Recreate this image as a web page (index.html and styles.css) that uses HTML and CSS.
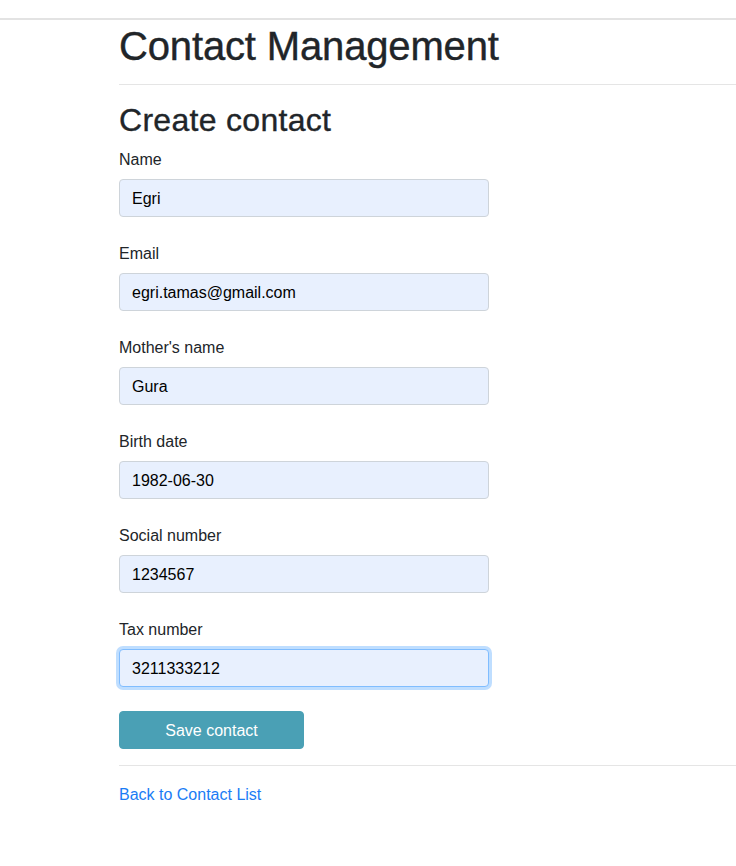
FILE: index.html
```html
<!DOCTYPE html>
<html lang="en">
<head>
<meta charset="utf-8">
<title>Create contact</title>
<link rel="stylesheet" href="styles.css">
</head>
<body>
<header class="topbar"></header>
<main class="page">
  <h1 class="title">Contact Management</h1>
  <hr class="rule rule-top">
  <h2 class="subtitle">Create contact</h2>
  <form class="form">
    <div class="form-group">
      <label class="label" for="name">Name</label>
      <input class="control" id="name" type="text" value="Egri">
    </div>
    <div class="form-group">
      <label class="label" for="email">Email</label>
      <input class="control" id="email" type="text" value="egri.tamas@gmail.com">
    </div>
    <div class="form-group">
      <label class="label" for="mother">Mother's name</label>
      <input class="control" id="mother" type="text" value="Gura">
    </div>
    <div class="form-group">
      <label class="label" for="birth">Birth date</label>
      <input class="control" id="birth" type="text" value="1982-06-30">
    </div>
    <div class="form-group">
      <label class="label" for="social">Social number</label>
      <input class="control" id="social" type="text" value="1234567">
    </div>
    <div class="form-group">
      <label class="label" for="tax">Tax number</label>
      <input class="control control-focus" id="tax" type="text" value="3211333212">
    </div>
    <button class="btn-save" type="button">Save contact</button>
  </form>
  <hr class="rule rule-bottom">
  <a class="back-link" href="#">Back to Contact List</a>
</main>
</body>
</html>
```
FILE: styles.css
```css
html, body {
  margin: 0;
  padding: 0;
  background: #fff;
}

body {
  font-family: "Liberation Sans", Arial, sans-serif;
  font-size: 16px;
  line-height: 24px;
  color: #212529;
}

.topbar {
  height: 18px;
  border-bottom: 2px solid #e3e3e3;
}

.page {
  padding: 2px 0 0 119px;
}

.title {
  margin: 0;
  font-size: 40px;
  line-height: 48px;
  font-weight: 400;
  letter-spacing: -0.15px;
  -webkit-text-stroke: 0.4px #212529;
}

.subtitle {
  margin: 0 0 8px;
  font-size: 32px;
  line-height: 38px;
  font-weight: 400;
  letter-spacing: 0.3px;
  -webkit-text-stroke: 0.35px #212529;
}

.rule {
  border: 0;
  border-top: 1px solid #e5e5e5;
  margin: 0;
}

.rule-top {
  margin: 14px 0 16px;
}

.rule-bottom {
  margin: 16px 0 16px;
}

.form {
  display: flex;
  flex-direction: column;
  align-items: flex-start;
}

.form-group {
  display: flex;
  flex-direction: column;
  margin-bottom: 24px;
}

.label {
  display: block;
  margin-bottom: 8px;
  padding-top: 1px;
  line-height: 23px;
}

.control {
  box-sizing: border-box;
  width: 370px;
  height: 38px;
  padding: 7px 12px 5px;
  font-family: inherit;
  font-size: 16px;
  line-height: 24px;
  color: #000;
  background: #e8f0fe;
  border: 1px solid #ced4da;
  border-radius: 4px;
  outline: none;
}

.control-focus {
  border-color: #80bdff;
  box-shadow: 0 0 0 3px rgba(0, 123, 255, 0.25);
}

.btn-save {
  box-sizing: border-box;
  width: 185px;
  height: 38px;
  padding: 7px 12px 5px;
  font-family: inherit;
  font-size: 16px;
  line-height: 24px;
  color: #fff;
  background: #4aa0b5;
  border: 1px solid #4aa0b5;
  border-radius: 4px;
  text-align: center;
}

.back-link {
  display: inline-block;
  padding-top: 1px;
  color: #1a7cf5;
  text-decoration: none;
  line-height: 23px;
}
```
